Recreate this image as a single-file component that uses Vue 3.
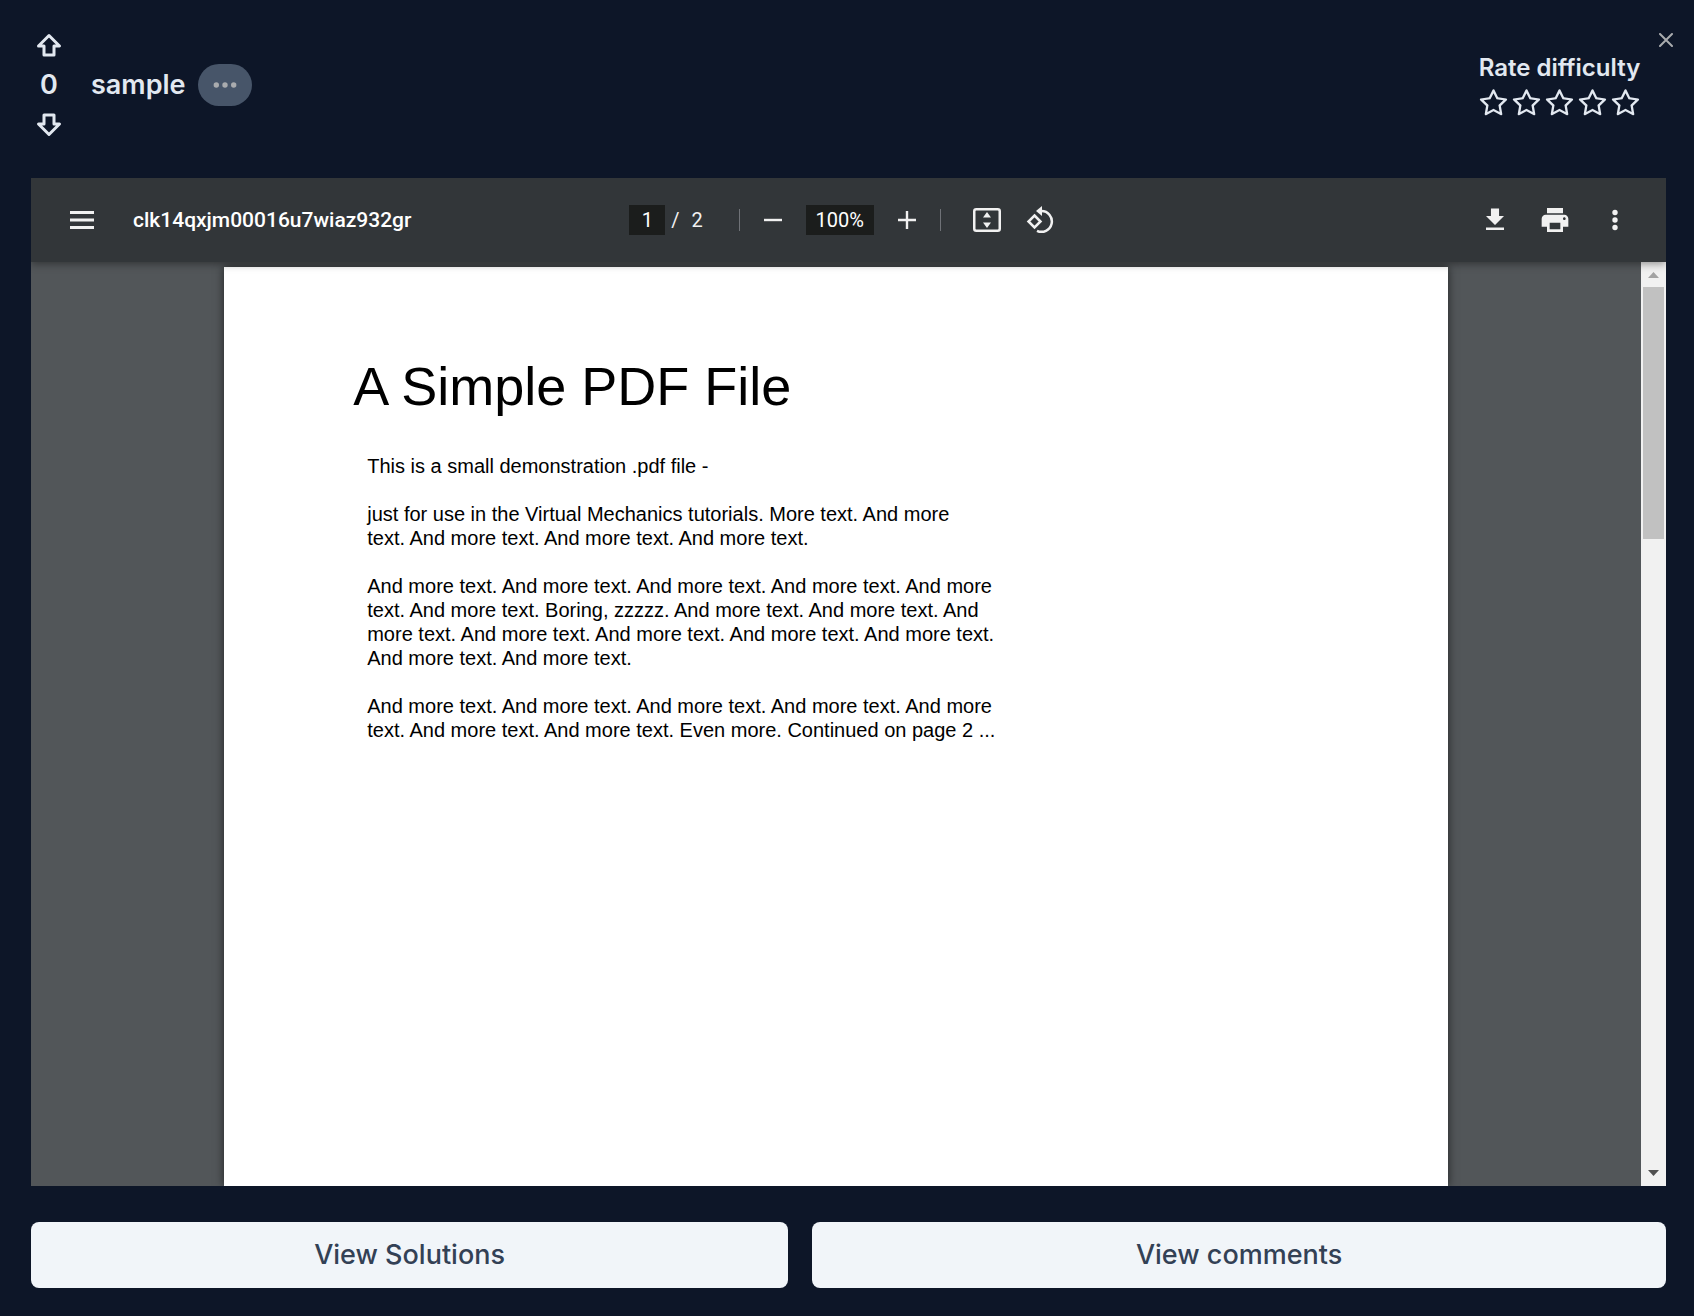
<script setup>
import { ref } from 'vue'

const votes = ref(0)
const page = ref('1')
const zoom = ref('100%')

const starPath =
  'M908.1 353.1l-253.9-36.9L540.7 86.1c-3.1-6.3-8.2-11.4-14.5-14.5-15.8-7.8-35-1.3-42.9 14.5L369.8 316.2l-253.9 36.9c-7 1-13.4 4.3-18.3 9.3a32.05 32.05 0 0 0 .6 45.3l183.7 179.1-43.4 252.9a31.95 31.95 0 0 0 46.4 33.7L512 754l227.1 119.4c6.2 3.3 13.4 4.4 20.3 3.2 17.4-3 29.1-19.5 26.1-36.9l-43.4-252.9 183.7-179.1c5-4.9 8.3-11.3 9.3-18.3 2.7-17.5-9.5-33.7-27-36.3zM664.8 561.6l36.1 210.3L512 672.7 323.1 772l36.1-210.3-152.8-149L417.6 382 512 190.7 606.4 382l211.2 30.7-152.8 148.9z'

const paragraphs = [
  ['This is a small demonstration .pdf file -'],
  [
    'just for use in the Virtual Mechanics tutorials. More text. And more',
    'text. And more text. And more text. And more text.',
  ],
  [
    'And more text. And more text. And more text. And more text. And more',
    'text. And more text. Boring, zzzzz. And more text. And more text. And',
    'more text. And more text. And more text. And more text. And more text.',
    'And more text. And more text.',
  ],
  [
    'And more text. And more text. And more text. And more text. And more',
    'text. And more text. And more text. Even more. Continued on page 2 ...',
  ],
]
</script>

<template>
  <main class="dialog">
    <button class="close" aria-label="Close">
      <svg width="14" height="14" viewBox="0 0 14 14" fill="none" stroke="currentColor" stroke-width="2" stroke-linecap="round">
        <path d="M1 1l12 12M13 1L1 13" />
      </svg>
    </button>

    <header class="head">
      <div class="votes">
        <button class="vote" aria-label="Upvote" @click="votes++">
          <svg width="26" height="26" viewBox="0 0 26 26" fill="none" stroke="currentColor" stroke-width="3" stroke-linejoin="round">
            <path d="M13 2.500L23.500 13H18V22H8V13H2.500z" />
          </svg>
        </button>
        <span class="count">{{ votes }}</span>
        <button class="vote" aria-label="Downvote" @click="votes--">
          <svg width="26" height="26" viewBox="0 0 26 26" fill="none" stroke="currentColor" stroke-width="3" stroke-linejoin="round">
            <path d="M13 23.500L23.500 13H18V4H8V13H2.500z" />
          </svg>
        </button>
      </div>
      <h1 class="title">sample</h1>
      <button class="more" aria-label="More options">
        <svg width="24" height="6" viewBox="0 0 24 6" fill="currentColor">
          <circle cx="3.300" cy="3" r="2.700" />
          <circle cx="12" cy="3" r="2.700" />
          <circle cx="20.700" cy="3" r="2.700" />
        </svg>
      </button>
      <div class="rating">
        <h2 class="rate-label">Rate difficulty</h2>
        <div class="stars">
          <button v-for="n in 5" :key="n" class="star" :aria-label="`Rate ${n}`">
            <svg width="33" height="33" viewBox="0 0 1024 1024" fill="currentColor"><path :d="starPath" /></svg>
          </button>
        </div>
      </div>
    </header>

    <section class="viewer">
      <div class="toolbar">
        <div class="side">
          <button class="tool" aria-label="Menu">
            <svg width="36" height="36" viewBox="0 0 24 24" fill="currentColor"><path d="M4 18h16v-2H4v2zm0-5h16v-2H4v2zm0-7v2h16V6H4z" /></svg>
          </button>
          <span class="file">clk14qxjm00016u7wiaz932gr</span>
        </div>
        <div class="center">
          <input v-model="page" class="field page-no" aria-label="Page number" />
          <span class="slash">/</span>
          <span class="total">2</span>
          <span class="rule"></span>
          <button class="tool" aria-label="Zoom out">
            <svg width="30" height="30" viewBox="0 0 20 20" fill="currentColor"><path d="M4 9.200h12v1.600H4z" /></svg>
          </button>
          <input v-model="zoom" class="field zoom" aria-label="Zoom level" />
          <button class="tool" aria-label="Zoom in">
            <svg width="30" height="30" viewBox="0 0 20 20" fill="currentColor"><path d="M9.200 4h1.600v5.200H16v1.600h-5.200V16H9.200v-5.200H4V9.200h5.200z" /></svg>
          </button>
          <span class="rule second"></span>
          <button class="tool fit" aria-label="Fit to page">
            <svg width="28" height="24" viewBox="0 0 28 24">
              <rect x="1.250" y="1.250" width="25.500" height="21.500" rx="2" fill="none" stroke="currentColor" stroke-width="2.500" />
              <path d="M14 4l4 5.500h-8zM14 20l4-5.500h-8z" fill="currentColor" />
            </svg>
          </button>
          <button class="tool" aria-label="Rotate counterclockwise">
            <svg width="28" height="28" viewBox="0 0 28 28" fill="none" stroke="currentColor" stroke-width="2.500">
              <path d="M8.500 9.500l6 6-6 6-6-6z" />
              <path d="M14.500 5h1a10.400 10.400 0 1 1-4.500 19.800" />
              <path d="M16 0v10l-6-5z" fill="currentColor" stroke="none" />
            </svg>
          </button>
        </div>
        <div class="side end">
          <button class="tool" aria-label="Download">
            <svg width="30" height="30" viewBox="0 0 20 20" fill="currentColor"><path d="M16 7.300h-3.300v-5H7.300v5H4l6 6zM4 15v1.700h12V15z" /></svg>
          </button>
          <button class="tool" aria-label="Print">
            <svg width="32" height="32" viewBox="0 0 24 24" fill="currentColor"><path d="M19 8H5c-1.660 0-3 1.340-3 3v6h4v4h12v-4h4v-6c0-1.660-1.340-3-3-3zm-3 11H8v-5h8v5zm3-7c-.55 0-1-.45-1-1s.45-1 1-1 1 .45 1 1-.45 1-1 1zm-1-9H6v4h12V3z" /></svg>
          </button>
          <button class="tool" aria-label="More actions">
            <svg width="30" height="30" viewBox="0 0 30 30" fill="currentColor">
              <circle cx="15" cy="7.500" r="2.700" />
              <circle cx="15" cy="15" r="2.700" />
              <circle cx="15" cy="22.500" r="2.700" />
            </svg>
          </button>
        </div>
      </div>

      <div class="body">
        <div class="canvas">
          <article class="sheet">
            <h3 class="doc-title">A Simple PDF File</h3>
            <p v-for="(lines, i) in paragraphs" :key="i" class="para">
              <template v-for="(line, j) in lines" :key="j">{{ line }}<br /></template>
            </p>
          </article>
        </div>
        <div class="scrollbar" aria-hidden="true">
          <svg class="arrow up" width="25" height="25" viewBox="0 0 25 25" fill="currentColor"><path d="M7 16l5.500-6 5.500 6z" /></svg>
          <div class="track"><div class="thumb"></div></div>
          <svg class="arrow" width="25" height="25" viewBox="0 0 25 25" fill="currentColor"><path d="M7 9l5.500 6L18 9z" /></svg>
        </div>
      </div>
    </section>

    <footer class="actions">
      <button class="action solutions">View Solutions</button>
      <button class="action comments">View comments</button>
    </footer>
  </main>
</template>

<style>
body {
  margin: 0;
  background: #0d1628;
}
</style>

<style scoped>
* {
  box-sizing: border-box;
}
button {
  border: 0;
  padding: 0;
  background: none;
  color: inherit;
  font: inherit;
  cursor: pointer;
  display: flex;
  align-items: center;
  justify-content: center;
}
svg {
  display: block;
}
h1,
h2,
h3,
p {
  margin: 0;
}
.dialog {
  position: relative;
  display: flex;
  flex-direction: column;
  min-height: 100vh;
  padding: 28px 28px 28px 31px;
  background: #0d1628;
  color: #e2e8f0;
  font-family: Inter, sans-serif;
}
.close {
  position: absolute;
  top: 28px;
  right: 16px;
  width: 24px;
  height: 24px;
  color: #a9abae;
}
.head {
  display: flex;
  align-items: center;
  height: 114px;
  margin-bottom: 36px;
}
.votes {
  display: flex;
  flex-direction: column;
  align-items: center;
  width: 36px;
}
.vote {
  width: 36px;
  height: 36px;
}
.count {
  font-size: 27px;
  line-height: 42px;
  font-weight: 600;
}
.title {
  margin-left: 24px;
  font-size: 27px;
  line-height: 42px;
  font-weight: 600;
}
.more {
  width: 54px;
  height: 42px;
  margin-left: 12px;
  border-radius: 21px;
  background: #475569;
  color: #a9abae;
}
.rating {
  margin-left: auto;
  margin-right: 24px;
}
.rate-label {
  font-size: 24px;
  line-height: 36px;
  font-weight: 600;
  text-align: center;
}
.stars {
  display: flex;
  margin-top: 1px;
}
.viewer {
  flex: 1;
  display: flex;
  flex-direction: column;
  font-family: Roboto, sans-serif;
}
.toolbar {
  position: relative;
  display: flex;
  align-items: center;
  height: 84px;
  padding: 0 27px;
  background: #323639;
  color: #f1f1f1;
  font-size: 20px;
  box-shadow: 0 2px 8px rgba(0, 0, 0, 0.4);
  clip-path: inset(0 0 -12px 0);
}
.side {
  flex: 1;
  display: flex;
  align-items: center;
}
.end {
  justify-content: flex-end;
  gap: 12px;
}
.tool {
  width: 48px;
  height: 48px;
}
.file {
  margin-left: 27px;
  color: #fff;
  font-size: 21px;
  font-weight: 500;
}
.center {
  display: flex;
  align-items: center;
  margin-right: 4px;
}
.field {
  height: 30px;
  border: 0;
  padding: 0;
  background: #1b1d1c;
  color: #fff;
  font: inherit;
  text-align: center;
}
.page-no {
  width: 36px;
}
.zoom {
  width: 68px;
  margin: 0 9px;
}
.slash {
  margin-left: 6px;
}
.total {
  margin-left: 12px;
}
.rule {
  width: 1px;
  height: 22px;
  margin: 0 9px 0 36px;
  background: #6f7277;
}
.second {
  margin: 0 22px 0 9px;
}
.fit {
  margin-right: 5px;
}
.body {
  flex: 1;
  display: flex;
}
.canvas {
  flex: 1;
  display: flex;
  justify-content: center;
  padding-top: 5px;
  background: #525659;
  overflow: hidden;
}
.sheet {
  width: 76%;
  padding: 86px 129px 0;
  background: #fff;
  color: #000;
  font-family: "Liberation Sans", Arial, sans-serif;
  box-shadow: 0 0 9px rgba(0, 0, 0, 0.6);
}
.doc-title {
  margin-bottom: 35px;
  font-size: 54px;
  line-height: 66px;
  font-weight: 400;
}
.para {
  margin: 0 0 24px 14px;
  font-size: 20px;
  line-height: 24px;
  white-space: nowrap;
}
.scrollbar {
  display: flex;
  flex-direction: column;
  width: 25px;
  background: #f1f1f1;
}
.track {
  flex: 1;
  padding: 0 2px;
}
.thumb {
  height: 252px;
  background: #c1c1c1;
}
.arrow {
  color: #505050;
}
.up {
  color: #a3a3a3;
}
.actions {
  display: flex;
  gap: 24px;
  margin-top: 36px;
}
.action {
  height: 66px;
  padding-bottom: 2px;
  border-radius: 8px;
  background: #f1f5f9;
  color: #334155;
  font-size: 27px;
  font-weight: 500;
}
.solutions {
  flex: 47 1 0;
}
.comments {
  flex: 53 1 0;
}
</style>
